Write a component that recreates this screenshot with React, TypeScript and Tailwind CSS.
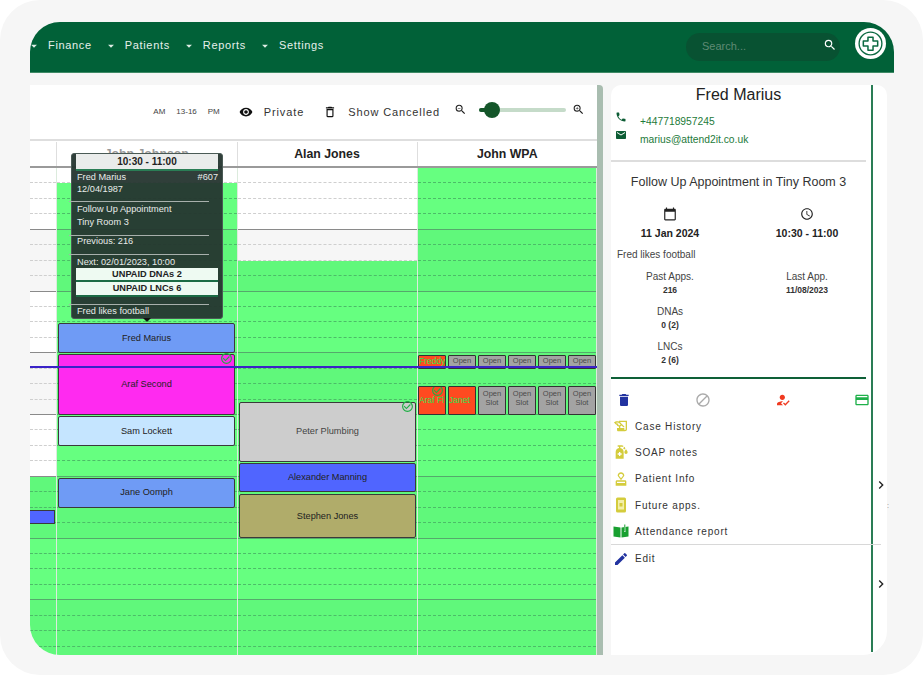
import React from 'react';
import {
  MdArrowDropDown, MdSearch, MdVisibility, MdDeleteOutline, MdZoomIn, MdZoomOut, MdPhone, MdEmail,
  MdCalendarToday, MdAccessTime, MdDelete, MdBlock, MdHowToReg, MdOutlineCreditCard, MdEdit,
  MdHistoryEdu, MdSanitizer, MdOutlineApproval, MdChevronRight, MdCheckCircleOutline,
} from 'react-icons/md';

const SLOT = 15.45;
const navItems = ['Finance', 'Patients', 'Reports', 'Settings'];

const columns = [
  { name: '', greenFrom: 20 },
  { name: 'John Johnson', greenFrom: 1 },
  { name: 'Alan Jones', greenFrom: 6 },
  { name: 'John WPA', greenFrom: 0 },
];

const events = [
  { col: 1, name: 'Fred Marius', top: 10.05, slots: 1.95, color: 'bg-[#6f9bf5] text-[#222]' },
  { col: 1, name: 'Araf Second', top: 12.05, slots: 3.95, color: 'bg-[#ff2af0] text-[#222]', done: true },
  { col: 1, name: 'Sam Lockett', top: 16.05, slots: 1.95, color: 'bg-[#c5e5ff] text-[#222]' },
  { col: 1, name: 'Jane Oomph', top: 20.05, slots: 1.95, color: 'bg-[#6f9bf5] text-[#222]' },
  { col: 2, name: 'Peter Plumbing', top: 15.15, slots: 3.85, color: 'bg-[#cdcdcd] text-[#444]', done: true },
  { col: 2, name: 'Alexander Manning', top: 19.1, slots: 1.9, color: 'bg-[#5065ff] text-[#222]' },
  { col: 2, name: 'Stephen Jones', top: 21.1, slots: 2.85, color: 'bg-[#b0ac6a] text-[#222]' },
];

function PhoneGlyph({ className }: { className?: string }) {
  return (
    <svg viewBox="0 0 16 16" className={className}>
      <rect x="3" y="0.5" width="10" height="15" rx="1.5" fill="currentColor" />
      <rect x="5" y="3" width="6" height="9.5" fill="#f3efa8" />
      <rect x="6.5" y="6" width="3" height="3.5" fill="currentColor" />
    </svg>
  );
}

function BookGlyph({ className }: { className?: string }) {
  return (
    <svg viewBox="0 0 16 16" className={className}>
      <path d="M0.5 3.5 7.5 4.5V14.5L0.5 13.5z" fill="currentColor" />
      <path d="M8.5 4.5 15.5 3.5V13.5L8.5 14.5z" fill="currentColor" />
      <path d="M11 1.5h1.5V9H11z" fill="#ffffff" />
      <path d="M11.3 1.5h1V8.5h-1z" fill="currentColor" />
    </svg>
  );
}

const menu = [
  { label: 'Case History', icon: MdHistoryEdu, color: 'text-[#d4cc3c]' },
  { label: 'SOAP notes', icon: MdSanitizer, color: 'text-[#d4cc3c]' },
  { label: 'Patient Info', icon: MdOutlineApproval, color: 'text-[#d4cc3c]' },
  { label: 'Future apps.', icon: PhoneGlyph, color: 'text-[#d4cc3c]' },
  { label: 'Attendance report', icon: BookGlyph, color: 'text-[#18a030]' },
];

function Header() {
  return (
    <header className="flex h-[51px] items-center justify-between overflow-hidden rounded-t-[30px] border-b border-[#3f8a66] bg-[#016138] pr-[8px]">
      <nav className="-ml-[3px] mb-[3px] flex items-center gap-[12px]">
        {navItems.map((item) => (
          <div key={item} className="flex items-center gap-[7px]">
            <MdArrowDropDown className="h-[14px] w-[14px] text-[#dfeee6]" />
            <span className="text-[11px] font-medium tracking-[0.06em] text-[#e6f0eb]">{item}</span>
          </div>
        ))}
      </nav>
      <div className="flex items-center gap-[15px]">
        <div className="flex h-[28px] w-[154px] items-center justify-between rounded-full bg-[#085232] pl-[16px] pr-[3px]">
          <span className="mb-px text-[11px] text-[#5f8a74]">Search...</span>
          <MdSearch className="mb-[5px] h-[14px] w-[14px] text-white" />
        </div>
        <div className="mb-[7px] flex h-[31px] w-[31px] items-center justify-center rounded-full bg-white">
          <svg viewBox="0 0 32 32" className="h-[27px] w-[27px]" fill="none" stroke="#0c6a42">
            <circle cx="16" cy="16" r="13.5" strokeWidth="1.6" />
            <path d="M13 8.5h6v4.5h5.5v6H19v5h-6v-5H7.5v-6H13z" strokeWidth="1.8" strokeLinejoin="round" />
          </svg>
        </div>
      </div>
    </header>
  );
}

function Toolbar() {
  return (
    <div className="flex h-[54px] items-center justify-end pr-[12px] text-[#333]">
      <div className="mr-[19.5px] flex items-center gap-[11px] text-[8px] text-[#444]">
        <span>AM</span>
        <span>13-16</span>
        <span>PM</span>
      </div>
      <MdVisibility className="mr-[10.5px] h-[14px] w-[14px] text-[#111]" />
      <span className="mr-[19px] text-[11px] tracking-[0.08em]">Private</span>
      <MdDeleteOutline className="mr-[11px] h-[14px] w-[14px] text-[#111]" />
      <span className="mr-[14px] text-[11px] tracking-[0.08em]">Show Cancelled</span>
      <MdZoomOut className="mb-[6px] mr-[12px] h-[13px] w-[13px] text-[#222]" />
      <div className="relative mb-[4px] mr-[6px] h-[4px] w-[87px] rounded-full bg-[#c5dbc9]">
        <div className="h-full w-[14px] rounded-full bg-[#14562a]" />
        <div className="absolute left-[5px] top-[-6px] h-[16px] w-[16px] rounded-full bg-[#14562a]" />
      </div>
      <MdZoomIn className="mb-[6px] h-[13px] w-[13px] text-[#222]" />
    </div>
  );
}

function Rows({ greenFrom }: { greenFrom: number }) {
  return (
    <>
      {Array.from({ length: 32 }, (_, i) => {
        const green = i >= greenFrom;
        const tinted = Math.floor(i / 4) % 2 === 1;
        const solid = i % 4 === 3;
        const bg = green ? (tinted ? 'bg-[#60f87b]' : 'bg-[#66ff80]') : tinted ? 'bg-[#f6f6f6]' : 'bg-white';
        const line = solid
          ? green
            ? 'border-solid border-[#55a96c]'
            : 'border-solid border-[#8a8a8a]'
          : green
            ? 'border-dashed border-[#4cbc68]'
            : 'border-dashed border-[#cfcfcf]';
        return <div key={i} className={`h-[15.45px] border-b ${bg} ${line}`} />;
      })}
    </>
  );
}

function SlotCell({ label, booked, tall, check }: { label: string; booked?: boolean; tall?: boolean; check?: boolean }) {
  const tone = booked
    ? 'bg-[#ff4a20] text-left text-[8.5px] text-[#2fe04f] whitespace-nowrap'
    : 'bg-[#a3a3a3] text-center text-[7.5px] text-[#4a4a4a] whitespace-pre-wrap';
  const size = !tall ? 'h-[14px] leading-[10px]' : booked ? 'h-[28.5px] leading-[26px]' : 'h-[28.5px] pt-[2px] leading-[9px]';
  return (
    <div className={`relative overflow-hidden rounded-[1px] border border-[#333] ${tone} ${size}`}>
      {label}
      {check && <MdCheckCircleOutline className="absolute right-[1px] top-[-3px] h-[13px] w-[13px] text-[#1faf45]" />}
    </div>
  );
}

function Calendar() {
  return (
    <section className="flex w-[567px] flex-col overflow-hidden rounded-bl-[30px] bg-white">
      <Toolbar />
      <div className="grid h-[29px] grid-cols-[27px_180.5px_180px_1fr] border-y-2 border-b-[#9a9a9a] border-t-[#dedede] pt-[1px] text-[12.3px] font-bold text-[#222]">
        {columns.map((col, i) => (
          <div
            key={i}
            className={`flex items-center justify-center border-r border-[#dedede] last:border-r-0 ${i === 1 ? 'text-[#9a9a9a]' : ''}`}
          >
            {col.name}
          </div>
        ))}
      </div>
      <div className="relative grid flex-1 grid-cols-[27px_180.5px_180px_1fr] overflow-hidden">
        {columns.map((col, i) => (
          <div key={i} className="relative border-r border-[#dcebdd] last:border-r-0">
            <Rows greenFrom={col.greenFrom} />
            {events
              .filter((e) => e.col === i)
              .map((e) => (
                <div
                  key={e.name}
                  className={`absolute flex items-center justify-center rounded-[2px] border border-[#3a3a3a] pt-px text-[9.2px] ${
                    i === 1 ? 'left-[1px] right-[1.5px]' : 'left-[1.5px] right-[0.5px]'
                  } ${e.color}`}
                  style={{ top: e.top * SLOT, height: e.slots * SLOT }}
                >
                  {e.name}
                  {e.done && (
                    <MdCheckCircleOutline className="absolute right-[1px] top-[-3px] h-[13px] w-[13px] text-[#1faf45]" />
                  )}
                </div>
              ))}
          </div>
        ))}
        {/* bits that sit inside a column on their own grid */}
        <div className="absolute left-0 top-[342px] h-[13.5px] w-[25px] rounded-br-[1px] border border-l-0 border-[#3a3a3a] bg-[#5065ff]" />
        <div className="absolute left-[388px] right-[1px] top-[187px] grid grid-cols-6 gap-x-[2px]">
          <SlotCell label="Freddy" booked />
          {Array.from({ length: 5 }, (_, i) => (
            <SlotCell key={i} label={'Open\nSlot'} />
          ))}
        </div>
        <div className="absolute left-[388px] right-[1px] top-[218px] grid grid-cols-6 gap-x-[2px]">
          <SlotCell label="Araf Fl" booked tall check />
          <SlotCell label="Janet" booked tall />
          {Array.from({ length: 4 }, (_, i) => (
            <SlotCell key={i} label={'Open\nSlot'} tall />
          ))}
        </div>
        <div className="absolute inset-x-0 top-[198px] h-[1.5px] bg-[#3a22c8]" />
      </div>
      <Tooltip />
    </section>
  );
}

function TipRule({ className }: { className: string }) {
  return <div className={`-ml-[7px] h-px w-[140px] bg-[#a8b0ac] ${className}`} />;
}

function Tooltip() {
  return (
    <div className="absolute left-[71px] top-[153px] z-10 h-[166px] w-[152px] rounded-[3px] border border-[#4a5a55] bg-[#25352f]/95 px-[4px] text-[9.2px] leading-[11px] text-[#e8ecea]">
      <div className="h-[17px] border-b-2 border-[#2a7d55] bg-white/90 text-center text-[10px] font-bold leading-[16px] text-[#222]">
        10:30 - 11:00
      </div>
      <div className="mt-[1px] flex justify-between pl-px">
        <span>Fred Marius</span>
        <span>#607</span>
      </div>
      <div className="mt-[0.5px] pl-px">12/04/1987</div>
      <TipRule className="mt-[6.5px]" />
      <div className="mt-[1.5px] pl-px">Follow Up Appointment</div>
      <div className="mt-[2px] pl-px">Tiny Room 3</div>
      <TipRule className="mt-[7px]" />
      <div className="pl-px">Previous: 216</div>
      <TipRule className="mt-[7.5px]" />
      <div className="mt-[1.5px] pl-px">Next: 02/01/2023, 10:00</div>
      <div className="mt-[0.5px] h-[14px] border-b-2 border-[#1c6b45] bg-[#eefaf2] text-center font-bold leading-[12px] text-[#222]">
        UNPAID DNAs 2
      </div>
      <div className="h-[15px] border-b-2 border-[#1c6b45] bg-[#eefaf2] text-center font-bold leading-[13px] text-[#222]">
        UNPAID LNCs 6
      </div>
      <TipRule className="mt-[7px]" />
      <div className="mt-[0.5px] pl-px">Fred likes football</div>
      <div className="absolute left-[71px] top-full h-0 w-0 border-x-[4px] border-t-[4px] border-x-transparent border-t-[#111]" />
    </div>
  );
}

function Stat({ label, value }: { label: string; value: string }) {
  return (
    <div className="text-center">
      <div className="text-[10px] leading-[14px] text-[#444]">{label}</div>
      <div className="text-[8.5px] font-bold leading-[12px] text-[#333]">{value}</div>
    </div>
  );
}

function Details() {
  return (
    <aside className="flex w-[276px] rounded-t-[10px] rounded-br-[24px] bg-white">
      <div className="h-[567px] w-[262px] border-r-2 border-[#2a7d55] pt-px">
        <h2 className="w-[255px] text-center text-[16px] leading-[18px] text-[#222]">Fred Marius</h2>
        <div className="mt-[9px] text-[10.3px] leading-[18px] text-[#1d7a3a]">
          <div className="flex">
            <MdPhone className="ml-[4px] mr-[13px] mt-[-2px] h-[12px] w-[12px] text-[#0c5c34]" />
            +447718957245
          </div>
          <div className="flex">
            <MdEmail className="ml-[4px] mr-[13px] mt-[-2px] h-[12px] w-[12px] text-[#0c5c34]" />
            marius@attend2it.co.uk
          </div>
        </div>
        <div className="mt-[11px] h-[2px] w-[255px] bg-[#dddddd]" />
        <div className="mt-[12px] w-[255px] text-center text-[12.5px] leading-[16px] text-[#333]">
          Follow Up Appointment in Tiny Room 3
        </div>
        <div className="mt-[17px] grid w-[255px] grid-cols-[118px_118px] gap-x-[19px]">
          <div className="flex flex-col items-center">
            <MdCalendarToday className="h-[14px] w-[14px] text-[#222]" />
            <div className="mt-[5px] text-[10.5px] font-bold leading-[14px] text-[#222]">11 Jan 2024</div>
          </div>
          <div className="flex flex-col items-center">
            <MdAccessTime className="h-[14px] w-[14px] text-[#222]" />
            <div className="mt-[5px] text-[10.5px] font-bold leading-[14px] text-[#222]">10:30 - 11:00</div>
          </div>
        </div>
        <div className="ml-[6px] mt-[8px] text-[10px] leading-[14px] text-[#444]">Fred likes football</div>
        <div className="mt-[8px] grid w-[255px] grid-cols-[118px_118px] gap-x-[19px] gap-y-[9px]">
          <Stat label="Past Apps." value="216" />
          <Stat label="Last App." value="11/08/2023" />
          <Stat label="DNAs" value="0 (2)" />
          <div />
          <Stat label="LNCs" value="2 (6)" />
        </div>
        <div className="mt-[11px] h-[2px] w-[255px] bg-[#0e6037]" />
        <div className="ml-[5px] mt-[13px] flex w-[254px] items-center justify-between">
          <MdDelete className="h-[16px] w-[16px] text-[#2233a0]" />
          <MdBlock className="h-[16px] w-[16px] text-[#aaaaaa]" />
          <MdHowToReg className="h-[16px] w-[16px] text-[#f03a20]" />
          <MdOutlineCreditCard className="h-[16px] w-[16px] text-[#1fb04a]" />
        </div>
        <div className="mt-[5px]">
          {menu.map(({ label, icon: Icon, color }) => (
            <div key={label} className="flex h-[26.3px] items-center pl-[2px]">
              <Icon className={`h-[16px] w-[16px] ${color}`} />
              <span className="ml-[6px] text-[10px] tracking-[0.08em] text-[#333]">{label}</span>
            </div>
          ))}
        </div>
        <div className="h-px w-[270px] bg-[#d8d8d8]" />
        <div className="flex h-[26.3px] items-center pl-[2px]">
          <MdEdit className="h-[16px] w-[16px] text-[#2233a0]" />
          <span className="ml-[6px] text-[10px] tracking-[0.08em] text-[#333]">Edit</span>
        </div>
      </div>
      <div className="flex flex-1 flex-col items-center pt-[392px]">
        <MdChevronRight className="h-[16px] w-[16px] text-[#222]" />
        <span className="mt-[9px] self-end text-[7px] leading-[7px] text-[#777]">:</span>
        <MdChevronRight className="mt-[67px] h-[16px] w-[16px] text-[#222]" />
      </div>
    </aside>
  );
}

export default function App() {
  return (
    <div className="h-screen w-full overflow-hidden bg-white [font-family:'Liberation_Sans',Arial,sans-serif]">
      <div className="relative h-full rounded-[40px] bg-[#f6f6f6] pl-[30px] pr-[29px] pt-[22px]">
        <Header />
        <main className="mt-[12px] flex h-[570px]">
          <Calendar />
          <div className="w-[6px] rounded-tr-[4px] bg-[#a9bdb0]" />
          <div className="w-[8px]" />
          <Details />
        </main>
      </div>
    </div>
  );
}
